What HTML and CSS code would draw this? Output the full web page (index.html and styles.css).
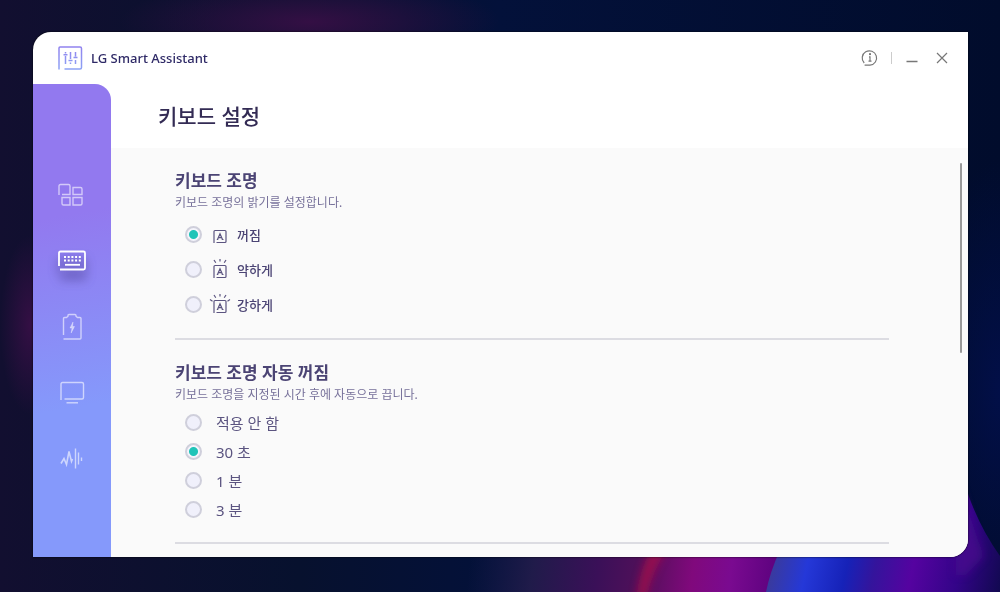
FILE: index.html
```
<!DOCTYPE html>
<html lang="ko">
<head>
    <meta charset="UTF-8">
    <meta name="viewport" content="width=device-width, initial-scale=1.0">
    <title>LG Smart Assistant</title>
    <link rel="stylesheet" href="styles.css">
</head>
<body>

    <!-- desktop wallpaper -->
    <svg class="wallpaper" viewBox="0 0 1000 592" preserveAspectRatio="none" aria-hidden="true">
        <defs>
            <linearGradient id="night" x1="0" y1="0" x2="1" y2="0">
                <stop offset="0" stop-color="#120f30"/>
                <stop offset="0.3" stop-color="#07112e"/>
                <stop offset="0.5" stop-color="#03113a"/>
                <stop offset="1" stop-color="#010c2c"/>
            </linearGradient>
            <linearGradient id="wave" gradientUnits="userSpaceOnUse" x1="470" y1="560" x2="785" y2="600">
                <stop offset="0" stop-color="#1a1b4a" stop-opacity="0"/>
                <stop offset="0.2" stop-color="#201b4a"/>
                <stop offset="0.4" stop-color="#3a1058"/>
                <stop offset="0.55" stop-color="#52105a"/>
                <stop offset="0.7" stop-color="#80097c"/>
                <stop offset="0.82" stop-color="#7a0a90"/>
                <stop offset="1" stop-color="#55007a"/>
            </linearGradient>
            <linearGradient id="blue" gradientUnits="userSpaceOnUse" x1="775" y1="550" x2="1000" y2="600">
                <stop offset="0" stop-color="#3a3a9c"/>
                <stop offset="0.15" stop-color="#2538d8"/>
                <stop offset="0.32" stop-color="#1622b8"/>
                <stop offset="0.44" stop-color="#34149c"/>
                <stop offset="0.6" stop-color="#5503a0"/>
                <stop offset="0.8" stop-color="#330488"/>
                <stop offset="1" stop-color="#10094e"/>
            </linearGradient>
            <radialGradient id="plum">
                <stop offset="0" stop-color="#340f44"/>
                <stop offset="1" stop-color="#340f44" stop-opacity="0"/>
            </radialGradient>
            <radialGradient id="navy">
                <stop offset="0" stop-color="#020f48"/>
                <stop offset="1" stop-color="#020f48" stop-opacity="0"/>
            </radialGradient>
            <filter id="soft" x="-50%" y="-50%" width="200%" height="200%"><feGaussianBlur stdDeviation="4"/></filter>
        </defs>
        <rect width="1000" height="592" fill="url(#night)"/>
        <ellipse cx="310" cy="22" rx="190" ry="45" fill="url(#plum)"/>
        <ellipse cx="30" cy="325" rx="30" ry="90" fill="url(#plum)"/>
        <ellipse cx="1000" cy="390" rx="80" ry="230" fill="url(#navy)"/>
        <rect x="460" y="540" width="330" height="52" fill="url(#wave)"/>
        <path d="M652 548H668Q652 570 646 600H636Q640 568 652 548Z" fill="#b0104a" opacity="0.7" filter="url(#soft)"/>
        <path d="M766 592Q770 572 780 550L968 494Q980 528 1000 556V592Z" fill="url(#blue)"/>
        <path d="M960 485Q972 524 984 556L966 575H955Z" fill="#4b0a8e" opacity="0.7" filter="url(#soft)"/>
    </svg>

    <div class="window">
        <header class="titlebar">
            <svg class="logo" width="26" height="26" viewBox="0 0 26 26" fill="none" stroke="url(#logoFill)" aria-hidden="true">
                <defs>
                    <linearGradient id="logoFill" gradientUnits="userSpaceOnUse" x1="0" y1="0" x2="0" y2="26">
                        <stop offset="0" stop-color="#9180ee"/>
                        <stop offset="1" stop-color="#8ca4f5"/>
                    </linearGradient>
                </defs>
                <path d="M2 24.500V3Q2 2 3 2H23Q24.500 2 24.500 3.500V22.500Q24.500 24 23 24H7.500" stroke-width="1.500"/>
                <path d="M8.500 11V19M13.500 7V14M13.500 17.500V19M18.500 7V11.500M18.500 15V19M8.500 7V8.500M6.500 9.800H10.500M11.500 15.500H15.500M16.500 12.500H20.500" stroke-width="1.500"/>
            </svg>
            <span class="app-name">LG Smart Assistant</span>
            <div class="window-buttons">
                <button type="button" class="icon-button" aria-label="정보">
                    <svg width="18" height="18" viewBox="0 0 18 18" fill="none" stroke="#777" stroke-width="1.200">
                        <path d="M3.200 14A7.200 7.200 0 1 1 9 16.200H3.600"/>
                        <path d="M8 7.800H9V12M7.500 12.200H10.500"/>
                        <circle cx="9" cy="5.200" r="0.500" fill="#777"/>
                    </svg>
                </button>
                <span class="separator"></span>
                <button type="button" class="icon-button" aria-label="최소화">
                    <svg width="12" height="12" viewBox="0 0 12 12" stroke="#777" stroke-width="1.500"><path d="M0.500 9.500H11.500"/></svg>
                </button>
                <button type="button" class="icon-button" aria-label="닫기">
                    <svg width="12" height="12" viewBox="0 0 12 12" stroke="#777" stroke-width="1.200"><path d="M1 1L11 11M11 1L1 11"/></svg>
                </button>
            </div>
        </header>

        <div class="layout">
            <nav class="sidebar">
                <button type="button" class="nav-item" aria-label="홈">
                    <svg width="28" height="24" viewBox="0 0 28 24">
                        <path d="M1 12V3Q1 1.500 2.500 1.500H10.500Q12 1.500 12 3V11.500H4"/>
                        <path d="M15 4.500H22.500Q24 4.500 24 6V11.500H15Z"/>
                        <path d="M4 14.500H12V22H5.500Q4 22 4 20.500Z"/>
                        <path d="M15 14.500H24V20.500Q24 22 22.500 22H15Z"/>
                    </svg>
                </button>
                <button type="button" class="nav-item active" aria-label="키보드">
                    <svg width="28" height="24" viewBox="0 0 28 24">
                        <path d="M1 17V4Q1 2.500 2.500 2.500H25.500Q27 2.500 27 4V19Q27 20.500 25.500 20.500H2" stroke-width="1.800"/>
                        <path d="M6 8H23M6 11.500H23" stroke-width="2" stroke-dasharray="2 1.700"/>
                        <path d="M7 15.800H22" stroke-width="1.800"/>
                    </svg>
                </button>
                <button type="button" class="nav-item" aria-label="전원">
                    <svg width="28" height="28" viewBox="0 0 28 28">
                        <path d="M5.500 22V5.500Q5.500 4.500 6.500 4.500H8.500L10 3.200V2.500Q10 1.500 11 1.500H17Q18 1.500 18 2.500V3.200L19.500 4.500H22Q23 4.500 23 5.500V25Q23 26 22 26H5.500"/>
                        <path d="M15 9L12 15H14L13.200 20L16.500 13.500H14.500Z" fill="currentColor" stroke-width="0.500"/>
                    </svg>
                </button>
                <button type="button" class="nav-item" aria-label="디스플레이">
                    <svg width="28" height="24" viewBox="0 0 28 24">
                        <path d="M3 19V3Q3 1.500 4.500 1.500H24Q25.500 1.500 25.500 3V16.500Q25.500 18 24 18H6.500"/>
                        <path d="M8.500 21.800H20"/>
                    </svg>
                </button>
                <button type="button" class="nav-item" aria-label="사운드">
                    <svg width="28" height="24" viewBox="0 0 28 24">
                        <path d="M3 16.500L6 11.500L8.500 17.500L11 4.500L13.500 14.500L14.500 12" stroke-width="1.600"/>
                        <path d="M17.500 1.500V21.500M20.500 5.500V17.500M23.500 10.500V14"/>
                    </svg>
                </button>
            </nav>

            <main class="page">
                <div class="page-header">
                    <h1>키보드 설정</h1>
                </div>

                <div class="page-body">
                    <div class="sections">
                        <section class="backlight">
                            <h2>키보드 조명</h2>
                            <p>키보드 조명의 밝기를 설정합니다.</p>
                            <div class="options">
                                <label>
                                    <input type="radio" name="backlight" checked>
                                    <svg width="22" height="22" viewBox="0 0 22 22"><use href="#keycap"/></svg>
                                    꺼짐
                                </label>
                                <label>
                                    <input type="radio" name="backlight">
                                    <svg width="22" height="22" viewBox="0 0 22 22">
                                        <use href="#keycap"/>
                                        <path d="M11 0V2.500M5 1L6.800 3.800M17 1L15.200 3.800"/>
                                    </svg>
                                    약하게
                                </label>
                                <label>
                                    <input type="radio" name="backlight">
                                    <svg width="22" height="22" viewBox="0 0 22 22">
                                        <use href="#keycap"/>
                                        <path d="M11 0V2.500M5 1L6.800 3.800M17 1L15.200 3.800M1 5.500L3.500 7.200M21 5.500L18.500 7.200"/>
                                    </svg>
                                    강하게
                                </label>
                            </div>
                        </section>

                        <section class="auto-off">
                            <h2>키보드 조명 자동 꺼짐</h2>
                            <p>키보드 조명을 지정된 시간 후에 자동으로 끕니다.</p>
                            <div class="options">
                                <label><input type="radio" name="autoOff"> 적용 안 함</label>
                                <label><input type="radio" name="autoOff" checked> 30 초</label>
                                <label><input type="radio" name="autoOff"> 1 분</label>
                                <label><input type="radio" name="autoOff"> 3 분</label>
                            </div>
                        </section>
                    </div>
                    <div class="scroll-track"><div class="scroll-thumb"></div></div>
                </div>
            </main>
        </div>
    </div>

    <svg width="0" height="0" class="symbols" aria-hidden="true">
        <symbol id="keycap" viewBox="0 0 22 22">
            <path d="M5 19V7.500Q5 6.500 6 6.500H16Q17 6.500 17 7.500V17.500Q17 18.500 16 18.500H7.500"/>
            <path d="M8.500 15.500L11 9.800L13.500 15.500M9.500 13.700H12.500M7.800 15.500H9.300M12.700 15.500H14.500"/>
        </symbol>
    </svg>

</body>
</html>
```
FILE: styles.css
```
* {
    box-sizing: border-box;
}
body {
    display: flex;
    min-height: 100vh;
    margin: 0;
    padding: 32px 32px 35px 33px;
    font-family: "Noto Sans", "Noto Sans CJK KR", sans-serif;
    color: #4b4474;
    background: #07112e;
}
.wallpaper {
    position: fixed;
    inset: 0;
    width: 100%;
    height: 100%;
    z-index: -1;
}
.symbols {
    position: absolute;
}
.window {
    display: flex;
    flex-direction: column;
    flex: 1;
    overflow: hidden;
    background: #fff;
    border-radius: 18px 0 18px 0;
    box-shadow: 0 0 2px #000;
}
h1, h2, p {
    margin: 0;
}
button {
    display: flex;
    align-items: center;
    justify-content: center;
    padding: 0;
    border: none;
    background: none;
    cursor: pointer;
}

/* title bar */
.titlebar {
    display: flex;
    align-items: center;
    height: 52px;
    padding: 0 20px 0 24px;
}
.app-name {
    margin-left: 8px;
    font-size: 13px;
    font-weight: 500;
    color: #2e2966;
}
.window-buttons {
    display: flex;
    align-items: center;
    gap: 18px;
    margin-left: auto;
}
.separator {
    width: 1px;
    height: 12px;
    margin: 0 -4px 0 -6px;
    background: #ccc;
}

/* sidebar */
.layout {
    display: flex;
    flex: 1;
}
.sidebar {
    width: 78px;
    padding-top: 78px;
    border-radius: 0 16px 0 0;
    background: linear-gradient(170deg, #9279ef 28%, #8599fb 68%);
}
.nav-item {
    width: 100%;
    height: 66px;
    color: rgba(255, 255, 255, 0.6);
}
.nav-item svg {
    fill: none;
    stroke: currentColor;
    stroke-width: 1.4px;
}
.nav-item.active {
    color: #fff;
}
.nav-item.active svg {
    overflow: visible;
    filter: drop-shadow(0 9px 5px rgba(50, 40, 110, 0.8));
}

/* page */
.page {
    display: flex;
    flex-direction: column;
    flex: 1;
}
.page-header {
    display: flex;
    align-items: center;
    height: 64px;
    padding-left: 47px;
}
h1 {
    font-size: 21px;
    font-weight: 500;
    line-height: 30px;
    color: #332b54;
}
.page-body {
    display: flex;
    flex: 1;
    background: #fafafa;
}
.sections {
    flex: 1;
    padding-left: 64px;
}
section {
    padding-top: 21px;
    border-bottom: 2px solid #dcdce2;
}
h2 {
    font-size: 17px;
    font-weight: 700;
    line-height: 24px;
}
p {
    font-size: 12px;
    line-height: 20px;
    color: #77719a;
}
.options {
    padding-left: 10px;
}
label {
    display: flex;
    align-items: center;
    width: fit-content;
    cursor: pointer;
}
label svg {
    margin: 0 6px 0 7px;
    fill: none;
    stroke: #5b5480;
    stroke-width: 1.2px;
}
.backlight .options {
    padding-top: 4px;
    padding-bottom: 16px;
}
.backlight label {
    height: 35px;
    font-size: 13px;
    font-weight: 500;
}
.auto-off .options {
    padding-top: 3px;
    padding-bottom: 18px;
}
.auto-off label {
    gap: 14px;
    height: 29px;
    font-size: 15px;
    line-height: 22px;
    color: #5b5480;
}
input[type="radio"] {
    appearance: none;
    width: 17px;
    height: 17px;
    margin: 0;
    border: 2px solid #cfcfdb;
    border-radius: 50%;
    background: #f0f0fb;
}
input[type="radio"]:checked {
    background: radial-gradient(circle, #20c4b8 4px, #f4f4fb 5px);
}
.scroll-track {
    width: 79px;
    padding: 15px 6px 0 0;
}
.scroll-thumb {
    width: 2px;
    height: 190px;
    margin-left: auto;
    border-radius: 1px;
    background: #999;
}
```
